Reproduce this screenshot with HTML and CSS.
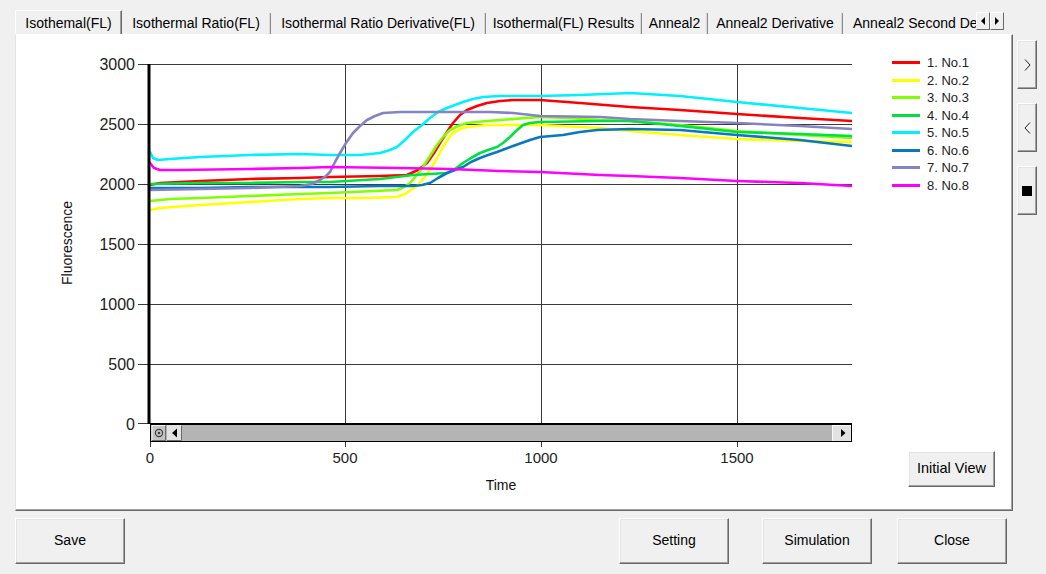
FILE: index.html
```html
<!DOCTYPE html>
<html>
<head>
<meta charset="utf-8">
<link rel="stylesheet" href="styles.css">
</head>
<body>
<div class="tabbar">
  <div class="tabs">
    <div class="tab active t1">Isothemal(FL)</div>
    <div class="tab t2">Isothermal Ratio(FL)</div>
    <div class="tab t3">Isothermal Ratio Derivative(FL)</div>
    <div class="tab t4">Isothermal(FL) Results</div>
    <div class="tab t5">Anneal2</div>
    <div class="tab t6">Anneal2 Derivative</div>
    <div class="tab t7">Anneal2 Second Derivative</div>
  </div>
  <div class="tab-arrows">
    <span class="tarr"><svg width="6" height="8" viewBox="0 0 6 8"><polygon points="5,0 5,8 1,4" fill="#000"/></svg></span>
    <span class="tarr"><svg width="6" height="8" viewBox="0 0 6 8"><polygon points="1,0 1,8 5,4" fill="#000"/></svg></span>
  </div>
</div>

<div class="main">
  <div class="panel">
    <svg class="chart" width="861" height="475" viewBox="16 35 861 475">
      <defs>
        <clipPath id="plot"><rect x="150" y="62" width="702" height="362"/></clipPath>
      </defs>
      <g class="grid">
        <line x1="138" y1="64.5" x2="852" y2="64.5"/>
        <line x1="138" y1="124.5" x2="852" y2="124.5"/>
        <line x1="138" y1="184.5" x2="852" y2="184.5"/>
        <line x1="138" y1="244.5" x2="852" y2="244.5"/>
        <line x1="138" y1="304.5" x2="852" y2="304.5"/>
        <line x1="138" y1="364.5" x2="852" y2="364.5"/>
        <line x1="138" y1="423.5" x2="150" y2="423.5"/>
        <line x1="345.5" y1="64" x2="345.5" y2="424"/>
        <line x1="541.5" y1="64" x2="541.5" y2="424"/>
        <line x1="737.5" y1="64" x2="737.5" y2="424"/>
        <line x1="150.5" y1="442" x2="150.5" y2="447"/>
        <line x1="345.5" y1="442" x2="345.5" y2="447"/>
        <line x1="541.5" y1="442" x2="541.5" y2="447"/>
        <line x1="737.5" y1="442" x2="737.5" y2="447"/>
      </g>
      <g class="series" clip-path="url(#plot)">
        <polyline class="s1" points="150,185 160,183 200,181 250,179 300,178 330,177 380,176 407,175 418,170 427,163 434,153 440,143 447,132 453,123 460,115 467,110 477,106 487,103 500,101 513,100 540,100 580,103 630,107 680,110 737,114 800,118 852,121"/>
        <polyline class="s2" points="150,210 160,208 200,205 250,202 300,199 330,198 360,198 397,197 405,194 411,190 417,186 423,179 430,170 437,158 443,147 448,139 453,133 460,129 467,127 477,126 487,125 540,125 600,128 630,131 680,135 737,139 800,141 852,142"/>
        <polyline class="s3" points="150,201 170,199 200,198 250,196 300,194 330,193 397,190 404,187 410,183 417,175 423,167 430,156 437,145 443,137 450,130 458,126 467,123 477,122 487,121 540,117 570,118 600,120 630,121 680,125 737,131 800,135 852,138"/>
        <polyline class="s4" points="150,184 200,183 250,183 300,182 330,182 380,179 413,175 430,174 447,173 455,169 463,163 471,158 480,153 488,150 497,147 503,143 510,137 516,131 523,125 530,123 540,122 600,121 630,121 680,126 737,132 800,134 852,136"/>
        <polyline class="s5" points="150,152 153,158 158,160 170,159 200,157 250,155 300,154 330,155 360,155 380,153 390,150 397,147 405,140 413,132 422,125 430,118 438,112 447,108 455,105 463,102 473,99 483,97 500,96 540,96 580,95 630,93 680,96 737,102 800,108 852,113"/>
        <polyline class="s6" points="150,188 200,188 250,187 300,187 330,187 380,186 413,186 422,185 430,183 438,178 447,173 455,170 463,167 471,162 480,158 488,155 497,152 513,146 530,140 540,137 563,135 580,132 597,130 630,129 680,130 737,135 800,140 852,146"/>
        <polyline class="s7" points="150,190 200,189 250,188 300,186 312,184 320,180 326,176 330,172 335,162 340,153 346,143 353,133 360,126 367,120 375,116 383,113 400,112 413,112 463,112 490,112 513,113 540,116 600,117 630,119 680,121 737,123 800,126 852,129"/>
        <polyline class="s8" points="150,163 154,168 160,170 180,170 250,169 300,168 330,167 400,168 450,169 500,171 540,172 600,175 630,176 680,178 737,181 800,183 852,186"/>
      </g>
      <rect class="yaxis" x="147.5" y="64" width="3" height="360"/>
      <g class="scroll">
        <rect x="150" y="423" width="702" height="19" fill="#000"/>
        <rect x="151" y="425" width="700" height="16" fill="#b4b4b4"/>
        <rect x="152" y="425" width="14" height="16" fill="#c4c4c4"/>
        <path d="M152 440.5 V425.5 H165.5" stroke="#f4f4f4" fill="none"/>
        <path d="M152 440.5 H165.5 V425.5" stroke="#6c6c6c" fill="none"/>
        <circle cx="159" cy="433" r="3.6" fill="none" stroke="#404040" stroke-width="1.2"/>
        <circle cx="159" cy="433" r="1.3" fill="#404040"/>
        <rect x="167" y="425" width="15" height="16" fill="#e2e2e2"/>
        <path d="M167 440.5 H181.5 V425.5" stroke="#6c6c6c" fill="none"/>
        <polygon points="177,428.5 177,437.5 172,433" fill="#000"/>
        <rect x="832" y="425" width="19" height="16" fill="#e2e2e2"/>
        <path d="M832.5 440.5 V425.5 H851" stroke="#fafafa" fill="none"/>
        <polygon points="841,429 841,437 845.5,433" fill="#000"/>
      </g>
      <g class="ylabels">
        <text x="135" y="69.8">3000</text>
        <text x="135" y="129.8">2500</text>
        <text x="135" y="189.8">2000</text>
        <text x="135" y="249.8">1500</text>
        <text x="135" y="309.8">1000</text>
        <text x="135" y="369.8">500</text>
        <text x="135" y="429.8">0</text>
      </g>
      <g class="xlabels">
        <text x="150" y="463">0</text>
        <text x="345" y="463">500</text>
        <text x="541" y="463">1000</text>
        <text x="737" y="463">1500</text>
      </g>
      <text class="title" x="501" y="490">Time</text>
      <text class="title" transform="translate(71.5,243) rotate(-90)">Fluorescence</text>
    </svg>
    <div class="side">
      <ul class="legend">
        <li><span class="sw c1"></span>1. No.1</li>
        <li><span class="sw c2"></span>2. No.2</li>
        <li><span class="sw c3"></span>3. No.3</li>
        <li><span class="sw c4"></span>4. No.4</li>
        <li><span class="sw c5"></span>5. No.5</li>
        <li><span class="sw c6"></span>6. No.6</li>
        <li><span class="sw c7"></span>7. No.7</li>
        <li><span class="sw c8"></span>8. No.8</li>
      </ul>
      <button class="btn initial">Initial View</button>
    </div>
  </div>
  <div class="nav">
    <button class="btn navbtn"><svg width="7" height="12" viewBox="0 0 7 12"><polyline points="1,0.5 6,6 1,11.5" fill="none" stroke="#222" stroke-width="1"/></svg></button>
    <button class="btn navbtn"><svg width="7" height="12" viewBox="0 0 7 12"><polyline points="6,0.5 1,6 6,11.5" fill="none" stroke="#222" stroke-width="1"/></svg></button>
    <button class="btn navbtn"><span class="stop"></span></button>
  </div>
</div>

<div class="actions">
  <button class="btn act">Save</button>
  <div class="spacer"></div>
  <button class="btn act">Setting</button>
  <button class="btn act sim">Simulation</button>
  <button class="btn act close">Close</button>
</div>
</body>
</html>
```

FILE: styles.css
```css
* { box-sizing: border-box; margin: 0; padding: 0; }
html, body { width: 1046px; height: 574px; overflow: hidden; }
body {
  background: #f0f0f0;
  font-family: "Liberation Sans", Arial, sans-serif;
  color: #000;
}

/* tabs */
.tabbar { display: flex; height: 24px; margin-top: 10px; }
.tabs {
  display: flex;
  align-items: flex-end;
  width: 976px;
  height: 24px;
  padding-left: 15px;
  overflow: hidden;
}
.tab {
  flex: none;
  height: 21px;
  font-size: 14px;
  line-height: 21px;
  text-align: center;
  white-space: nowrap;
  overflow: hidden;
  border-right: 1px solid #8c8c8c;
  box-shadow: inset -1px 0 #d8d8d8;
}
.tab.active {
  height: 24px;
  line-height: 22px;
  padding-top: 1px;
  border-left: 1px solid #fff;
  border-top: 1px solid #fff;
  border-right: 1px solid #696969;
  box-shadow: inset -1px 0 #a0a0a0;
}
.t1 { width: 107px; }
.t2 { width: 149px; }
.t3 { width: 215px; }
.t4 { width: 156px; }
.t5 { width: 66px; }
.t6 { width: 135px; }
.t7 { width: 200px; text-align: left; padding-left: 10px; border-right: none; box-shadow: none; }

.tab-arrows { display: flex; margin-top: 2px; height: 18px; }
.tarr {
  width: 14px;
  height: 18px;
  display: flex;
  align-items: center;
  justify-content: center;
  background: #f0f0f0;
  border: 1px solid;
  border-color: #fff #696969 #696969 #fff;
}

/* main area */
.main { display: flex; gap: 4px; height: 477px; padding-left: 15px; }
.panel {
  width: 998px;
  height: 477px;
  flex: none;
  display: flex;
  background: #fff;
  border: 1px solid;
  border-color: #fff #696969 #696969 #e3e3e3;
  box-shadow: inset -1px -1px #a0a0a0;
}
.chart { display: block; flex: none; }
.grid line { stroke: #3a3a3a; stroke-width: 1; shape-rendering: crispEdges; }
.series polyline {
  fill: none;
  stroke-width: 2.6;
  stroke-linejoin: round;
  stroke-linecap: round;
}
.s1 { stroke: #ff0000; }
.s2 { stroke: #ffff00; }
.s3 { stroke: #80ff00; }
.s4 { stroke: #00e040; }
.s5 { stroke: #00f0ff; }
.s6 { stroke: #0878c0; }
.s7 { stroke: #8484c4; }
.s8 { stroke: #ff00ff; }
.yaxis { fill: #000; }
.ylabels text { font-family: "Liberation Sans", Arial, sans-serif; font-size: 16px; fill: #222; text-anchor: end; }
.xlabels text { font-family: "Liberation Sans", Arial, sans-serif; font-size: 15px; fill: #222; text-anchor: middle; }
.title { font-family: "Liberation Sans", Arial, sans-serif; font-size: 14px; fill: #111; text-anchor: middle; }

.side {
  flex: 1;
  display: flex;
  flex-direction: column;
  padding: 19px 0 23px 15px;
}
.legend { list-style: none; font-size: 13px; color: #222; }
.legend li { display: flex; align-items: center; height: 17.5px; gap: 7px; white-space: nowrap; }
.sw { width: 28px; height: 3px; flex: none; }
.c1 { background: #ff0000; }
.c2 { background: #ffff00; }
.c3 { background: #80ff00; }
.c4 { background: #00e040; }
.c5 { background: #00f0ff; }
.c6 { background: #0878c0; }
.c7 { background: #8484c4; }
.c8 { background: #ff00ff; }

.btn {
  font-family: "Liberation Sans", Arial, sans-serif;
  font-size: 14px;
  color: #000;
  background: #f0f0f0;
  border: 1px solid;
  border-color: #fff #696969 #696969 #fff;
  box-shadow: inset -1px -1px #a0a0a0, inset 1px 1px #e3e3e3;
  display: flex;
  align-items: center;
  justify-content: center;
}
.initial { margin-top: auto; margin-left: 16px; width: 87px; height: 36px; font-size: 14.5px; padding-bottom: 3px; }

.nav { display: flex; flex-direction: column; gap: 14px; padding-top: 6px; }
.navbtn { width: 20px; height: 49px; }
.stop { width: 10px; height: 10px; background: #000; display: block; }

/* bottom buttons */
.actions { display: flex; margin-top: 7px; padding: 0 39px 0 15px; }
.act { width: 110px; height: 46px; padding-bottom: 3px; }
.spacer { flex: 1; }
.sim { margin-left: 33px; }
.close { margin-left: 25px; }
```
